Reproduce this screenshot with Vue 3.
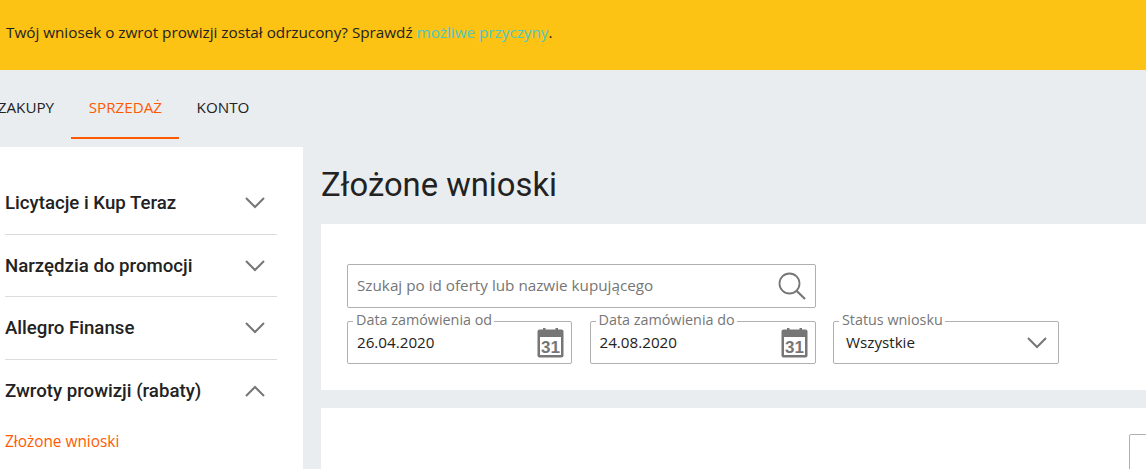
<template>
  <div class="page">
    <div class="banner">
      <p>Twój wniosek o zwrot prowizji został odrzucony? Sprawdź <a href="#" class="banner-link">możliwe przyczyny</a>.</p>
    </div>

    <nav class="tabs">
      <a v-for="tab in tabs" :key="tab" href="#" class="tab" :class="{ active: tab === 'SPRZEDAŻ' }">{{ tab }}</a>
    </nav>

    <div class="content">
      <aside class="sidebar">
        <div v-for="item in menu" :key="item.name" class="menu-row" :class="{ open: item.open }">
          <span class="menu-name">{{ item.name }}</span>
          <svg class="menu-arrow" width="20" height="12" viewBox="0 0 20 12">
            <path :d="item.open ? 'M1 11L10 2L19 11' : 'M1 1L10 10L19 1'" fill="none" stroke="#767676" stroke-width="2" />
          </svg>
        </div>
        <a href="#" class="submenu-link">Złożone wnioski</a>
      </aside>

      <main class="main">
        <h1 class="title">Złożone wnioski</h1>

        <section class="card filters">
          <div class="filters-grid">
            <div class="field search">
              <span class="placeholder">Szukaj po id oferty lub nazwie kupującego</span>
              <svg width="28" height="28" viewBox="0 0 28 28">
                <circle cx="11.500" cy="11.500" r="10" fill="none" stroke="#767676" stroke-width="1.800" />
                <path d="M18.500 18.800L27 27" fill="none" stroke="#767676" stroke-width="2.200" />
              </svg>
            </div>

            <div v-for="d in dates" :key="d.label" class="field">
              <label class="field-label">{{ d.label }}</label>
              <span class="value">{{ d.value }}</span>
              <svg class="calendar" width="27" height="30" viewBox="0 0 27 30">
                <path d="M6 0h2.500v3H6zM18.500 0H21v3h-2.500z" fill="#767676" />
                <rect x="0.500" y="1.500" width="26" height="28" rx="2" fill="#767676" />
                <rect x="3" y="9" width="21" height="18" fill="#fff" />
                <text x="13.500" y="25" text-anchor="middle" class="calendar-day">31</text>
              </svg>
            </div>

            <div class="field">
              <label class="field-label">Status wniosku</label>
              <span class="value select-value">Wszystkie</span>
              <svg class="select-arrow" width="20" height="12" viewBox="0 0 20 12">
                <path d="M1 1L10 10L19 1" fill="none" stroke="#767676" stroke-width="2" />
              </svg>
            </div>
          </div>
        </section>

        <section class="card results">
          <div class="pager-box"></div>
        </section>
      </main>
    </div>
  </div>
</template>

<script setup>
const tabs = ['ZAKUPY', 'SPRZEDAŻ', 'KONTO']

const menu = [
  { name: 'Licytacje i Kup Teraz', open: false },
  { name: 'Narzędzia do promocji', open: false },
  { name: 'Allegro Finanse', open: false },
  { name: 'Zwroty prowizji (rabaty)', open: true }
]

const dates = [
  { label: 'Data zamówienia od', value: '26.04.2020' },
  { label: 'Data zamówienia do', value: '24.08.2020' }
]
</script>

<style>
html,
body {
  margin: 0;
  height: 100%;
  overflow: hidden;
  background: #eaedf0;
}
</style>

<style scoped>
.page {
  width: 1146px;
  height: 469px;
  overflow: hidden;
  font-family: "Open Sans", sans-serif;
  color: #222;
}

.banner {
  height: 70px;
  background: #fcc314;
  display: flex;
  align-items: center;
  padding-left: 6px;
  font-size: 15.250px;
}

.banner p {
  margin: 0 0 6px;
}

.banner-link {
  color: #4fc9c0;
  text-decoration: none;
}

.tabs {
  height: 77px;
  display: flex;
  margin-left: -19.500px;
}

.tab {
  height: 69px;
  padding: 6px 17.300px 0;
  display: flex;
  align-items: center;
  font-size: 15.200px;
  color: #222;
  text-decoration: none;
  box-sizing: border-box;
  border-bottom: 2px solid transparent;
}

.tab.active {
  color: #ff5a00;
  border-bottom-color: #ff5a00;
}

.content {
  display: flex;
  gap: 18px;
  height: 322px;
}

.sidebar {
  width: 303px;
  flex: none;
  background: #fff;
  box-sizing: border-box;
  padding: 25px 26px 0 5px;
}

.menu-row {
  height: 62.400px;
  display: flex;
  align-items: center;
  justify-content: space-between;
  box-sizing: border-box;
  border-bottom: 1px solid #dcdcdc;
  padding: 0 12px 0 0;
}

.menu-row:first-child {
  height: 63px;
}

.menu-row.open {
  border-bottom: none;
}

.menu-name {
  font-family: Roboto, sans-serif;
  font-weight: 500;
  font-size: 18.650px;
  color: #222;
}

.submenu-link {
  display: block;
  margin-top: 9px;
  font-size: 15.400px;
  color: #ff5a00;
  text-decoration: none;
}

.main {
  flex: 1;
  min-width: 0;
}

.title {
  margin: 0 0 2px;
  height: 75px;
  display: flex;
  align-items: center;
  font-family: Roboto, sans-serif;
  font-weight: 400;
  font-size: 32.750px;
  color: #222;
}

.card {
  background: #fff;
}

.filters {
  height: 166px;
  padding: 40px 26px 0;
  box-sizing: border-box;
}

.filters-grid {
  display: grid;
  grid-template-columns: 225px 226px 226px;
  column-gap: 17.500px;
  row-gap: 13px;
}

.field {
  position: relative;
  height: 43px;
  box-sizing: border-box;
  border: 1px solid #b0b0b0;
  border-radius: 2px;
  display: flex;
  align-items: center;
  justify-content: space-between;
  padding: 0 9px;
  background: #fff;
}

.search {
  grid-column: 1 / -1;
  width: 469px;
  height: 44px;
}

.placeholder {
  font-size: 15.250px;
  color: #767676;
  margin-bottom: 2px;
}

.field-label {
  position: absolute;
  top: -11px;
  left: 5px;
  padding: 0 2px 0 3px;
  background: #fff;
  font-size: 14.350px;
  line-height: 18px;
  color: #767676;
}

.value {
  font-size: 15.200px;
  color: #222;
  margin-bottom: 2px;
}

.select-value {
  margin-left: 3px;
}

.select-arrow {
  margin-right: 2px;
}

.calendar {
  margin-right: -2px;
  margin-top: 1px;
}

.calendar-day {
  font-family: "Liberation Sans", sans-serif;
  font-weight: 700;
  font-size: 17px;
  fill: #767676;
}

.results {
  position: relative;
  margin-top: 18px;
  height: 70px;
}

.pager-box {
  position: absolute;
  left: 808px;
  top: 26px;
  width: 40px;
  height: 40px;
  box-sizing: border-box;
  border: 1px solid #b0b0b0;
  border-radius: 2px;
}
</style>
